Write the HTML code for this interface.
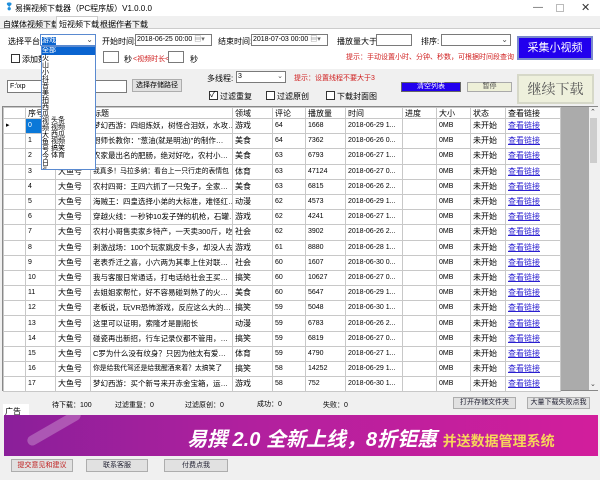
<!DOCTYPE html>
<html><head><meta charset="utf-8"><style>
*{margin:0;padding:0;box-sizing:border-box}
body{width:600px;height:480px;background:#f0f0f0;font-family:"Liberation Sans","Noto Sans CJK SC",sans-serif;font-size:8px;color:#000;position:relative;overflow:hidden}
.a{position:absolute;white-space:nowrap}
.in{position:absolute;background:#fff;border:1px solid #7a7a7a;white-space:nowrap;overflow:hidden;line-height:10px}
.btn{position:absolute;border:1px solid #adadad;background:#e1e1e1;text-align:center;white-space:nowrap;overflow:hidden}
.cb{position:absolute;width:9px;height:9px;border:1px solid #333;background:#fff}
table{border-collapse:collapse;table-layout:fixed;position:absolute;left:3px;top:107px;width:557px}
td{border:1px solid #c8c8c8;height:15.2px;padding:0 2px;overflow:hidden;white-space:nowrap;font-size:7px;background:#fff;line-height:12px}
tr.h td{height:11px;font-size:8px;line-height:9px}
td.l{color:#2a1fd0;text-decoration:underline}
td.t{font-size:8px}
td.x{font-size:7.5px}
</style></head><body>
<div class="a" style="left:0;top:0;width:600px;height:16px;background:#fff"></div>
<div class="a" style="left:5px;top:2px;color:#1f8fdc;font-size:10px;font-weight:bold">❢</div>
<div class="a" style="left:15px;top:3px;font-size:8px">易撰视频下载器（PC程序版）V1.0.0.0</div>
<div class="a" style="left:533px;top:2px;font-size:10px;color:#555">—</div>
<div class="a" style="left:556px;top:4px;width:8px;height:8px;border:1px solid #bbb"></div>
<div class="a" style="left:581px;top:1px;font-size:11px;color:#333">✕</div>
<div class="a" style="left:0;top:28px;width:600px;height:1px;background:#ccc"></div>
<div class="a" style="left:3px;top:19px;font-size:8px">自媒体视频下载</div>
<div class="a" style="left:56px;top:16px;width:42px;height:13px;background:#fff;border:1px solid #ccc;border-bottom:none;font-size:8px;padding:2px 0 0 2px">短视频下载</div>
<div class="a" style="left:100px;top:19px;font-size:8px">根据作者下载</div>
<div class="a" style="left:0;top:29px;width:600px;height:40px;background:#fff"></div>
<div class="a" style="left:8px;top:36px">选择平台:</div>
<div class="in" style="left:40px;top:34px;width:56px;height:12px;border-color:#5a8ad0"><span style="background:#0a64d0;color:#fff;margin:1px;display:inline-block;font-size:7px;line-height:8px">游戏</span><span style="position:absolute;right:2px;top:0;color:#555">⌄</span></div>
<div class="a" style="left:102px;top:36px">开始时间:</div>
<div class="in" style="left:135px;top:34px;width:77px;height:12px;font-size:7px;padding-left:1px">2018-06-25 00:00 <span style="color:#666">▤▾</span></div>
<div class="a" style="left:218px;top:36px">结束时间:</div>
<div class="in" style="left:251px;top:34px;width:77px;height:12px;font-size:7px;padding-left:1px">2018-07-03 00:00 <span style="color:#666">▤▾</span></div>
<div class="a" style="left:337px;top:36px">播放量大于:</div>
<div class="in" style="left:376px;top:34px;width:36px;height:12px"></div>
<div class="a" style="left:421px;top:36px">排序:</div>
<div class="in" style="left:441px;top:34px;width:70px;height:12px"><span style="position:absolute;right:2px;top:0;color:#555">⌄</span></div>
<div class="a" style="left:517px;top:36px;width:76px;height:24px;background:#2200ee;border:2px solid #7a8acc;color:#fff;font-size:11px;text-align:center;line-height:20px">采集小视频</div>
<div class="cb" style="left:11px;top:54px"></div>
<div class="a" style="left:22px;top:54px">添加数</div>
<div class="in" style="left:103px;top:51px;width:16px;height:12px"></div>
<div class="a" style="left:124px;top:54px">秒</div>
<div class="a" style="left:133px;top:54px;color:#d02020;font-size:7px">&lt;视频时长&lt;</div>
<div class="in" style="left:168px;top:51px;width:16px;height:12px"></div>
<div class="a" style="left:190px;top:54px">秒</div>
<div class="a" style="left:346px;top:52px;color:#d02020;font-size:7px">提示：手动设置小时、分钟、秒数，可根据时间段查询</div>
<div class="in" style="left:7px;top:80px;width:120px;height:13px;font-size:7px;padding-left:2px;line-height:11px">F:\xp</div>
<div class="btn" style="left:132px;top:79px;width:50px;height:13px;font-size:7px;line-height:11px">选择存储路径</div>
<div class="a" style="left:207px;top:73px">多线程:</div>
<div class="in" style="left:236px;top:71px;width:50px;height:12px;font-size:7px;padding-left:1px">3<span style="position:absolute;right:2px;top:0;color:#555">⌄</span></div>
<div class="a" style="left:294px;top:73px;color:#d02020;font-size:7px">提示：设置线程不要大于3</div>
<div class="cb" style="left:209px;top:91px"></div><div class="a" style="left:210px;top:89px;font-size:8px">✓</div>
<div class="a" style="left:220px;top:91px">过滤重复</div>
<div class="cb" style="left:266px;top:91px"></div>
<div class="a" style="left:277px;top:91px">过滤原创</div>
<div class="cb" style="left:326px;top:91px"></div>
<div class="a" style="left:337px;top:91px">下载封面图</div>
<div class="a" style="left:401px;top:82px;width:60px;height:10px;background:#2200ee;border:1px solid #666;color:#fff;font-size:7px;text-align:center;line-height:8px">清空列表</div>
<div class="a" style="left:467px;top:82px;width:45px;height:10px;background:#eef0d8;border:1px solid #aaa;color:#444;font-size:7px;text-align:center;line-height:8px">暂停</div>
<div class="a" style="left:517px;top:74px;width:77px;height:30px;background:#eef0dc;border:2px solid #d6d8c8;color:#555;font-size:14px;text-align:center;line-height:26px;font-family:'Noto Serif CJK SC',serif">继续下载</div>
<div class="a" style="left:2px;top:106px;width:596px;height:285px;background:#ababab;border:1px solid #888"></div>
<div class="a" style="left:589px;top:107px;width:9px;height:283px;background:#f0f0f0"></div>
<div class="a" style="left:590px;top:108px;font-size:7px;color:#444">⌃</div>
<div class="a" style="left:590px;top:380px;font-size:7px;color:#444">⌄</div>
<div class="a" style="left:590px;top:118px;width:7px;height:45px;background:#cdcdcd"></div>
<table>
<colgroup><col style="width:22px"><col style="width:30px"><col style="width:35px"><col style="width:142px"><col style="width:40px"><col style="width:33px"><col style="width:40px"><col style="width:57px"><col style="width:34px"><col style="width:34px"><col style="width:35px"><col style="width:55px"></colgroup>
<tr class="h"><td></td><td>序号</td><td></td><td>标题</td><td>领域</td><td>评论</td><td>播放量</td><td>时间</td><td>进度</td><td>大小</td><td>状态</td><td>查看链接</td></tr>
<tr><td>▸</td><td style="background:#0a78d8;color:#fff">0</td><td></td><td class="x">梦幻西游：四组炼妖，树怪合泪妖，水攻…</td><td class="t">游戏</td><td>64</td><td>1668</td><td>2018-06-29 1...</td><td></td><td>0MB</td><td class="t">未开始</td><td class="l t">查看链接</td></tr>
<tr><td></td><td>1</td><td></td><td class="x">厨师长教你："葱油(就是明油)"的制作…</td><td class="t">美食</td><td>64</td><td>7362</td><td>2018-06-26 0...</td><td></td><td>0MB</td><td class="t">未开始</td><td class="l t">查看链接</td></tr>
<tr><td></td><td>2</td><td></td><td class="x">农家最出名的肥肠，绝对好吃，农村小…</td><td class="t">美食</td><td>63</td><td>6793</td><td>2018-06-27 1...</td><td></td><td>0MB</td><td class="t">未开始</td><td class="l t">查看链接</td></tr>
<tr><td></td><td>3</td><td class="t">大鱼号</td><td style="font-size:6.8px">我真多！马拉多纳：看台上一只行走的表情包</td><td class="t">体育</td><td>63</td><td>47124</td><td>2018-06-27 0...</td><td></td><td>0MB</td><td class="t">未开始</td><td class="l t">查看链接</td></tr>
<tr><td></td><td>4</td><td class="t">大鱼号</td><td class="x">农村四哥：王四六抓了一只兔子，全家…</td><td class="t">美食</td><td>63</td><td>6815</td><td>2018-06-26 2...</td><td></td><td>0MB</td><td class="t">未开始</td><td class="l t">查看链接</td></tr>
<tr><td></td><td>5</td><td class="t">大鱼号</td><td class="x">海贼王：四皇选择小弟的大标准，难怪红…</td><td class="t">动漫</td><td>62</td><td>4573</td><td>2018-06-29 1...</td><td></td><td>0MB</td><td class="t">未开始</td><td class="l t">查看链接</td></tr>
<tr><td></td><td>6</td><td class="t">大鱼号</td><td class="x">穿越火线：一秒钟10发子弹的机枪，石罐…</td><td class="t">游戏</td><td>62</td><td>4241</td><td>2018-06-27 1...</td><td></td><td>0MB</td><td class="t">未开始</td><td class="l t">查看链接</td></tr>
<tr><td></td><td>7</td><td class="t">大鱼号</td><td class="x">农村小哥售卖家乡特产，一天卖300斤，吃…</td><td class="t">社会</td><td>62</td><td>3902</td><td>2018-06-26 2...</td><td></td><td>0MB</td><td class="t">未开始</td><td class="l t">查看链接</td></tr>
<tr><td></td><td>8</td><td class="t">大鱼号</td><td class="x">刺激战场：100个玩家跳皮卡多，却没人去…</td><td class="t">游戏</td><td>61</td><td>8880</td><td>2018-06-28 1...</td><td></td><td>0MB</td><td class="t">未开始</td><td class="l t">查看链接</td></tr>
<tr><td></td><td>9</td><td class="t">大鱼号</td><td class="x">老表乔迁之喜，小六两为其奉上住对联…</td><td class="t">社会</td><td>60</td><td>1607</td><td>2018-06-30 0...</td><td></td><td>0MB</td><td class="t">未开始</td><td class="l t">查看链接</td></tr>
<tr><td></td><td>10</td><td class="t">大鱼号</td><td class="x">我与客服日常通话，打电话给社会王买…</td><td class="t">搞笑</td><td>60</td><td>10627</td><td>2018-06-27 0...</td><td></td><td>0MB</td><td class="t">未开始</td><td class="l t">查看链接</td></tr>
<tr><td></td><td>11</td><td class="t">大鱼号</td><td class="x">去姐姐家帮忙，好不容易碰到熟了的火…</td><td class="t">美食</td><td>60</td><td>5647</td><td>2018-06-29 1...</td><td></td><td>0MB</td><td class="t">未开始</td><td class="l t">查看链接</td></tr>
<tr><td></td><td>12</td><td class="t">大鱼号</td><td class="x">老板说，玩VR恐怖游戏，反应这么大的…</td><td class="t">搞笑</td><td>59</td><td>5048</td><td>2018-06-30 1...</td><td></td><td>0MB</td><td class="t">未开始</td><td class="l t">查看链接</td></tr>
<tr><td></td><td>13</td><td class="t">大鱼号</td><td class="x">这里可以证明，索隆才是副船长</td><td class="t">动漫</td><td>59</td><td>6783</td><td>2018-06-26 2...</td><td></td><td>0MB</td><td class="t">未开始</td><td class="l t">查看链接</td></tr>
<tr><td></td><td>14</td><td class="t">大鱼号</td><td class="x">碰瓷再出新招，行车记录仪都不管用，…</td><td class="t">搞笑</td><td>59</td><td>6819</td><td>2018-06-27 0...</td><td></td><td>0MB</td><td class="t">未开始</td><td class="l t">查看链接</td></tr>
<tr><td></td><td>15</td><td class="t">大鱼号</td><td class="x">C罗为什么没有纹身？只因为他太有爱…</td><td class="t">体育</td><td>59</td><td>4790</td><td>2018-06-27 1...</td><td></td><td>0MB</td><td class="t">未开始</td><td class="l t">查看链接</td></tr>
<tr><td></td><td>16</td><td class="t">大鱼号</td><td style="font-size:6.8px">你是给我代驾还是给我醒酒来着？太搞笑了</td><td class="t">搞笑</td><td>58</td><td>14252</td><td>2018-06-29 1...</td><td></td><td>0MB</td><td class="t">未开始</td><td class="l t">查看链接</td></tr>
<tr><td></td><td>17</td><td class="t">大鱼号</td><td class="x">梦幻西游：买个新号来开赤金宝箱，运…</td><td class="t">游戏</td><td>58</td><td>752</td><td>2018-06-30 1...</td><td></td><td>0MB</td><td class="t">未开始</td><td class="l t">查看链接</td></tr>
</table>
<div class="a" style="left:41px;top:46px;width:55px;height:124px;background:#fff;border:1px solid #5a8ad0;overflow:hidden;line-height:8px;font-size:7px;white-space:normal">
<div style="background:#0a64d0;color:#fff;width:100%">全部</div>
<div style="width:9px;word-break:break-all;line-height:7px">火山小抖音美拍西瓜视频大鱼号今日头条梦幻西游好看</div>
<div style="position:absolute;left:9px;top:70px;width:18px;word-break:break-all;line-height:7px">头条视频西瓜视频搞笑体育</div>
</div>
<div class="a" style="left:52px;top:400px;font-size:7px">待下载：100</div>
<div class="a" style="left:115px;top:400px;font-size:7px">过滤重复：0</div>
<div class="a" style="left:185px;top:400px;font-size:7px">过滤原创：0</div>
<div class="a" style="left:257px;top:399px;font-size:7px">成功：0</div>
<div class="a" style="left:323px;top:400px;font-size:7px">失败：0</div>
<div class="btn" style="left:453px;top:397px;width:63px;height:12px;font-size:7px;line-height:10px;color:#223">打开存储文件夹</div>
<div class="btn" style="left:527px;top:397px;width:63px;height:12px;font-size:7px;line-height:10px;color:#223">大量下载失败点我</div>
<div class="a" style="left:3px;top:404px;width:26px;height:12px;background:#fff;font-size:8px;padding:2px 0 0 2px">广告</div>
<div class="a" style="left:4px;top:415px;width:594px;height:41px;background:linear-gradient(90deg,#8a1f9a 0%,#b0209e 40%,#d21e9c 100%);overflow:hidden">
<div style="position:absolute;left:20px;top:8px;width:60px;height:10px;border-radius:5px;background:rgba(255,255,255,.25);transform:rotate(-30deg)"></div>
<div style="position:absolute;left:183px;top:8px;color:#fff;font-size:20px;font-style:italic;font-weight:bold;white-space:nowrap">易撰 2.0 全新上线，8折钜惠 <span style="color:#f6d65a;font-size:14px;font-style:normal">并送数据管理系统</span></div>
</div>
<div class="btn" style="left:11px;top:459px;width:62px;height:13px;font-size:7px;line-height:11px;color:#c02020">提交意见和建议</div>
<div class="btn" style="left:86px;top:459px;width:62px;height:13px;font-size:7px;line-height:11px;color:#223">联系客服</div>
<div class="btn" style="left:164px;top:459px;width:64px;height:13px;font-size:7px;line-height:11px;color:#223">付费点我</div>
</body></html>
